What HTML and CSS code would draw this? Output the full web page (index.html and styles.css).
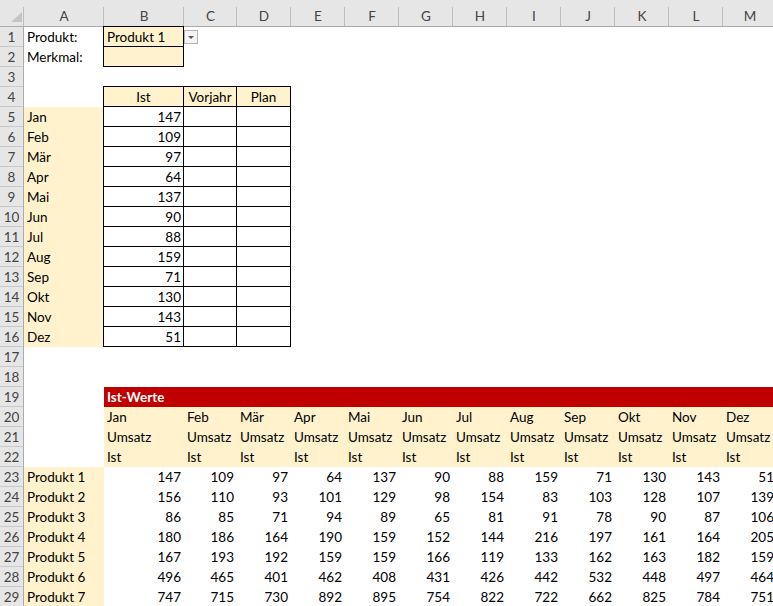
FILE: index.html
```html
<!DOCTYPE html>
<html lang="de">
<head>
<meta charset="utf-8">
<title>Ist-Werte</title>
<link rel="stylesheet" href="styles.css">
</head>
<body>
<div class="sheet">
  <div class="colhead">
    <div class="ch corner"><svg class="selall" width="24" height="26" viewBox="0 0 24 26"><polygon points="22,12 22,22 11,22" fill="#c4c4c4"/></svg></div>
    <div class="ch c-a">A</div>
    <div class="ch c-b">B</div>
    <div class="ch c-c">C</div>
    <div class="ch c-n">D</div>
    <div class="ch c-n">E</div>
    <div class="ch c-n">F</div>
    <div class="ch c-n">G</div>
    <div class="ch c-n">H</div>
    <div class="ch c-n">I</div>
    <div class="ch c-n">J</div>
    <div class="ch c-n">K</div>
    <div class="ch c-n">L</div>
    <div class="ch c-n">M</div>
  </div>
  <div class="body">
    <div class="rowhead">
      <div class="rh">1</div><div class="rh">2</div><div class="rh">3</div><div class="rh">4</div><div class="rh">5</div>
      <div class="rh">6</div><div class="rh">7</div><div class="rh">8</div><div class="rh">9</div><div class="rh">10</div>
      <div class="rh">11</div><div class="rh">12</div><div class="rh">13</div><div class="rh">14</div><div class="rh">15</div>
      <div class="rh">16</div><div class="rh">17</div><div class="rh">18</div><div class="rh">19</div><div class="rh">20</div>
      <div class="rh">21</div><div class="rh">22</div><div class="rh">23</div><div class="rh">24</div><div class="rh">25</div>
      <div class="rh">26</div><div class="rh">27</div><div class="rh">28</div><div class="rh">29</div>
    </div>
    <div class="grid">
      <div class="row"><div class="cell c-a">Produkt:</div><div class="cell c-b fill bd">Produkt 1</div><div class="cell c-c dd-cell"><span class="dd"><svg width="12" height="12" viewBox="0 0 12 12"><polygon points="3,5 9,5 6,8" fill="#555"/></svg></span></div></div>
      <div class="row"><div class="cell c-a">Merkmal:</div><div class="cell c-b fill bd"></div></div>
      <div class="row"></div>
      <div class="row"><div class="cell c-a"></div><div class="cell c-b fill bd ctr">Ist</div><div class="cell c-c fill bd ctr">Vorjahr</div><div class="cell c-n fill bd ctr">Plan</div></div>
      <div class="row"><div class="cell c-a fill">Jan</div><div class="cell c-b bd num">147</div><div class="cell c-c bd"></div><div class="cell c-n bd"></div></div>
      <div class="row"><div class="cell c-a fill">Feb</div><div class="cell c-b bd num">109</div><div class="cell c-c bd"></div><div class="cell c-n bd"></div></div>
      <div class="row"><div class="cell c-a fill">Mär</div><div class="cell c-b bd num">97</div><div class="cell c-c bd"></div><div class="cell c-n bd"></div></div>
      <div class="row"><div class="cell c-a fill">Apr</div><div class="cell c-b bd num">64</div><div class="cell c-c bd"></div><div class="cell c-n bd"></div></div>
      <div class="row"><div class="cell c-a fill">Mai</div><div class="cell c-b bd num">137</div><div class="cell c-c bd"></div><div class="cell c-n bd"></div></div>
      <div class="row"><div class="cell c-a fill">Jun</div><div class="cell c-b bd num">90</div><div class="cell c-c bd"></div><div class="cell c-n bd"></div></div>
      <div class="row"><div class="cell c-a fill">Jul</div><div class="cell c-b bd num">88</div><div class="cell c-c bd"></div><div class="cell c-n bd"></div></div>
      <div class="row"><div class="cell c-a fill">Aug</div><div class="cell c-b bd num">159</div><div class="cell c-c bd"></div><div class="cell c-n bd"></div></div>
      <div class="row"><div class="cell c-a fill">Sep</div><div class="cell c-b bd num">71</div><div class="cell c-c bd"></div><div class="cell c-n bd"></div></div>
      <div class="row"><div class="cell c-a fill">Okt</div><div class="cell c-b bd num">130</div><div class="cell c-c bd"></div><div class="cell c-n bd"></div></div>
      <div class="row"><div class="cell c-a fill">Nov</div><div class="cell c-b bd num">143</div><div class="cell c-c bd"></div><div class="cell c-n bd"></div></div>
      <div class="row"><div class="cell c-a fill">Dez</div><div class="cell c-b bd num">51</div><div class="cell c-c bd"></div><div class="cell c-n bd"></div></div>
      <div class="row"></div>
      <div class="row"></div>
      <div class="row"><div class="cell c-a"></div><div class="cell band">Ist-Werte</div></div>
      <div class="row">
        <div class="cell c-a"></div>
        <div class="cell c-b fill">Jan</div><div class="cell c-c fill">Feb</div><div class="cell c-n fill">Mär</div><div class="cell c-n fill">Apr</div>
        <div class="cell c-n fill">Mai</div><div class="cell c-n fill">Jun</div><div class="cell c-n fill">Jul</div><div class="cell c-n fill">Aug</div>
        <div class="cell c-n fill">Sep</div><div class="cell c-n fill">Okt</div><div class="cell c-n fill">Nov</div><div class="cell c-n fill">Dez</div>
      </div>
      <div class="row">
        <div class="cell c-a"></div>
        <div class="cell c-b fill">Umsatz</div><div class="cell c-c fill">Umsatz</div><div class="cell c-n fill">Umsatz</div><div class="cell c-n fill">Umsatz</div>
        <div class="cell c-n fill">Umsatz</div><div class="cell c-n fill">Umsatz</div><div class="cell c-n fill">Umsatz</div><div class="cell c-n fill">Umsatz</div>
        <div class="cell c-n fill">Umsatz</div><div class="cell c-n fill">Umsatz</div><div class="cell c-n fill">Umsatz</div><div class="cell c-n fill">Umsatz</div>
      </div>
      <div class="row">
        <div class="cell c-a"></div>
        <div class="cell c-b fill">Ist</div><div class="cell c-c fill">Ist</div><div class="cell c-n fill">Ist</div><div class="cell c-n fill">Ist</div>
        <div class="cell c-n fill">Ist</div><div class="cell c-n fill">Ist</div><div class="cell c-n fill">Ist</div><div class="cell c-n fill">Ist</div>
        <div class="cell c-n fill">Ist</div><div class="cell c-n fill">Ist</div><div class="cell c-n fill">Ist</div><div class="cell c-n fill">Ist</div>
      </div>
      <div class="row">
        <div class="cell c-a fill">Produkt 1</div>
        <div class="cell c-b num">147</div><div class="cell c-c num">109</div><div class="cell c-n num">97</div><div class="cell c-n num">64</div>
        <div class="cell c-n num">137</div><div class="cell c-n num">90</div><div class="cell c-n num">88</div><div class="cell c-n num">159</div>
        <div class="cell c-n num">71</div><div class="cell c-n num">130</div><div class="cell c-n num">143</div><div class="cell c-n num">51</div>
      </div>
      <div class="row">
        <div class="cell c-a fill">Produkt 2</div>
        <div class="cell c-b num">156</div><div class="cell c-c num">110</div><div class="cell c-n num">93</div><div class="cell c-n num">101</div>
        <div class="cell c-n num">129</div><div class="cell c-n num">98</div><div class="cell c-n num">154</div><div class="cell c-n num">83</div>
        <div class="cell c-n num">103</div><div class="cell c-n num">128</div><div class="cell c-n num">107</div><div class="cell c-n num">139</div>
      </div>
      <div class="row">
        <div class="cell c-a fill">Produkt 3</div>
        <div class="cell c-b num">86</div><div class="cell c-c num">85</div><div class="cell c-n num">71</div><div class="cell c-n num">94</div>
        <div class="cell c-n num">89</div><div class="cell c-n num">65</div><div class="cell c-n num">81</div><div class="cell c-n num">91</div>
        <div class="cell c-n num">78</div><div class="cell c-n num">90</div><div class="cell c-n num">87</div><div class="cell c-n num">106</div>
      </div>
      <div class="row">
        <div class="cell c-a fill">Produkt 4</div>
        <div class="cell c-b num">180</div><div class="cell c-c num">186</div><div class="cell c-n num">164</div><div class="cell c-n num">190</div>
        <div class="cell c-n num">159</div><div class="cell c-n num">152</div><div class="cell c-n num">144</div><div class="cell c-n num">216</div>
        <div class="cell c-n num">197</div><div class="cell c-n num">161</div><div class="cell c-n num">164</div><div class="cell c-n num">205</div>
      </div>
      <div class="row">
        <div class="cell c-a fill">Produkt 5</div>
        <div class="cell c-b num">167</div><div class="cell c-c num">193</div><div class="cell c-n num">192</div><div class="cell c-n num">159</div>
        <div class="cell c-n num">159</div><div class="cell c-n num">166</div><div class="cell c-n num">119</div><div class="cell c-n num">133</div>
        <div class="cell c-n num">162</div><div class="cell c-n num">163</div><div class="cell c-n num">182</div><div class="cell c-n num">159</div>
      </div>
      <div class="row">
        <div class="cell c-a fill">Produkt 6</div>
        <div class="cell c-b num">496</div><div class="cell c-c num">465</div><div class="cell c-n num">401</div><div class="cell c-n num">462</div>
        <div class="cell c-n num">408</div><div class="cell c-n num">431</div><div class="cell c-n num">426</div><div class="cell c-n num">442</div>
        <div class="cell c-n num">532</div><div class="cell c-n num">448</div><div class="cell c-n num">497</div><div class="cell c-n num">464</div>
      </div>
      <div class="row">
        <div class="cell c-a fill">Produkt 7</div>
        <div class="cell c-b num">747</div><div class="cell c-c num">715</div><div class="cell c-n num">730</div><div class="cell c-n num">892</div>
        <div class="cell c-n num">895</div><div class="cell c-n num">754</div><div class="cell c-n num">822</div><div class="cell c-n num">722</div>
        <div class="cell c-n num">662</div><div class="cell c-n num">825</div><div class="cell c-n num">784</div><div class="cell c-n num">751</div>
      </div>
    </div>
  </div>
</div>
</body>
</html>
```

FILE: styles.css
```css
* {
  box-sizing: border-box;
  margin: 0;
  padding: 0;
}

html, body {
  background: #ffffff;
}

body {
  width: 773px;
  height: 606px;
  overflow: hidden;
  font-family: Lato, "Open Sans", sans-serif;
  font-size: 13.5px;
  color: #000000;
}

.sheet {
  width: 773px;
  height: 606px;
  overflow: hidden;
}

/* column header */
.colhead {
  display: flex;
  width: 777px;
  height: 27px;
  background: #e6e6e6;
  border-bottom: 1px solid #ababab;
}

.ch {
  flex: none;
  height: 26px;
  display: flex;
  align-items: flex-end;
  justify-content: center;
  line-height: 19px;
  color: #444444;
  background: linear-gradient(#bdbdbd, #bdbdbd) right bottom / 1px 19px no-repeat;
}

.corner {
  width: 24px;
  align-items: stretch;
}

.selall {
  display: block;
}

.c-a { width: 80px; }
.c-b { width: 80px; }
.c-c { width: 53px; }
.c-n { width: 54px; }

/* body */
.body {
  display: flex;
}

.rowhead {
  flex: none;
  width: 24px;
  background: #e6e6e6;
  border-right: 1px solid #ababab;
}

.rh {
  height: 20px;
  padding-top: 1px;
  line-height: 18px;
  text-align: center;
  color: #444444;
  border-bottom: 1px solid #c9c9c9;
}

.grid {
  flex: none;
  width: 753px;
}

.row {
  display: flex;
  height: 20px;
}

.cell {
  flex: none;
  height: 20px;
  padding: 1px 3px 0;
  line-height: 19px;
  white-space: nowrap;
}

.fill {
  background: #fff2cc;
}

.bd {
  border-right: 1px solid #000000;
  border-bottom: 1px solid #000000;
  padding-right: 2px;
  box-shadow: -1px 0 0 0 #000000, 0 -1px 0 0 #000000, -1px -1px 0 0 #000000;
}

.num {
  text-align: right;
}

.ctr {
  text-align: center;
  padding-left: 0;
  padding-right: 0;
}

.band {
  flex: 1;
  background: #c00000;
  color: #ffffff;
  font-weight: 700;
}

.dd-cell {
  padding-top: 0;
}

.dd {
  display: block;
  width: 14px;
  height: 14px;
  margin: 3px 0 0 -3px;
  border: 1px solid #b4b4b4;
  background: #f4f4f4;
}

.dd svg {
  display: block;
}
```
